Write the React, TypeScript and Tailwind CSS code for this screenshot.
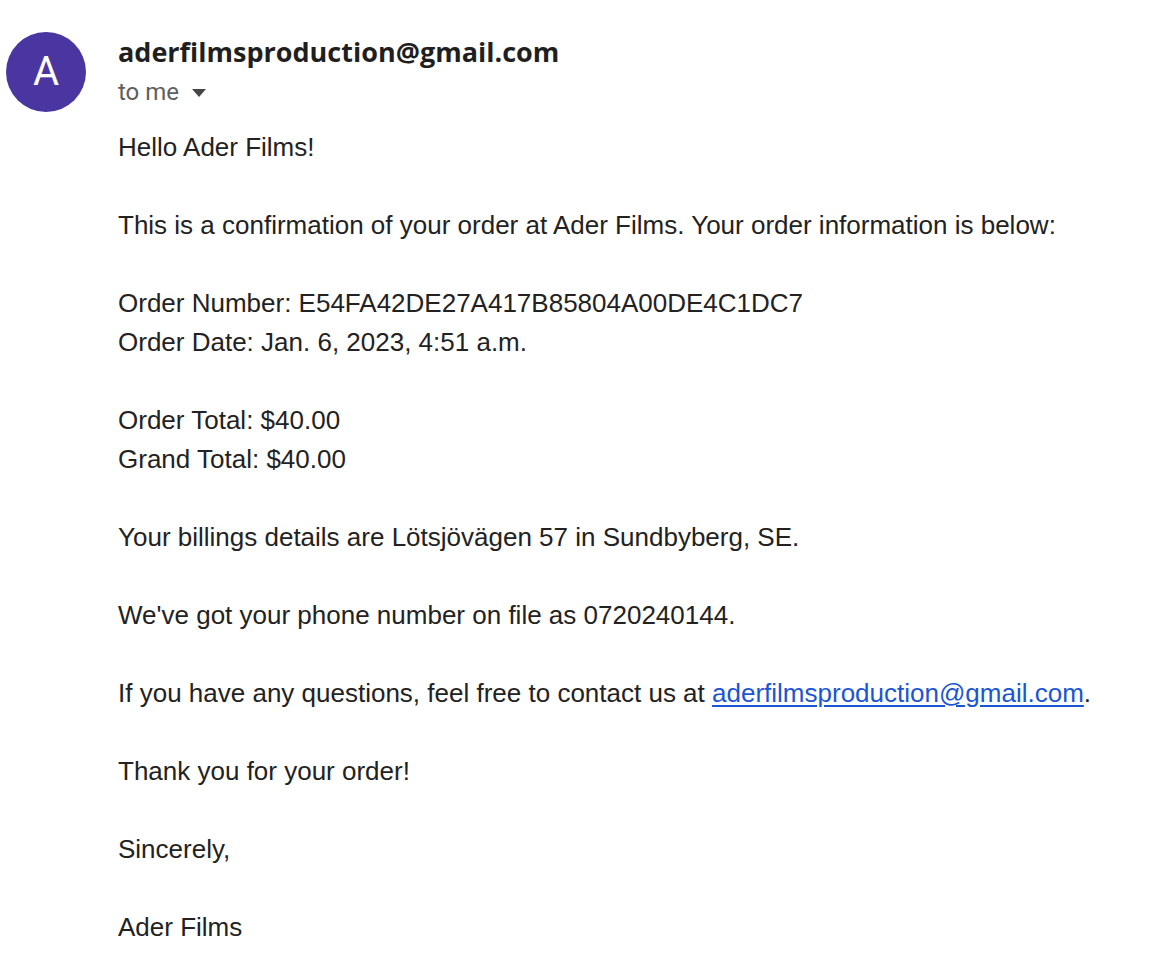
import React from "react";

export default function App() {
  const body = [
    "Hello Ader Films!",
    "",
    "This is a confirmation of your order at Ader Films. Your order information is below:",
    "",
    "Order Number: E54FA42DE27A417B85804A00DE4C1DC7",
    "Order Date: Jan. 6, 2023, 4:51 a.m.",
    "",
    "Order Total: $40.00",
    "Grand Total: $40.00",
    "",
    "Your billings details are Lötsjövägen 57 in Sundbyberg, SE.",
    "",
    "We've got your phone number on file as 0720240144.",
    "",
  ];
  const tail = [
    "",
    "Thank you for your order!",
    "",
    "Sincerely,",
    "",
    "Ader Films",
  ];
  return (
    <div className="w-[1150px] h-[976px] bg-white overflow-hidden flex pt-[32px] pl-[6px]">
      <div className="w-[80px] h-[80px] rounded-full bg-[#4a35a1] flex items-center justify-center shrink-0">
        <span
          className="text-white text-[40px] leading-none"
          style={{ fontFamily: "Roboto, 'Noto Sans', sans-serif" }}
        >
          A
        </span>
      </div>
      <div className="ml-[32px] flex flex-col">
        <div
          className="text-[27px] font-bold leading-[36px] text-[#1f1f1f] mt-[2px]"
          style={{ fontFamily: "'Open Sans', Roboto, sans-serif" }}
        >
          aderfilmsproduction@gmail.com
        </div>
        <div
          className="flex items-center gap-[12px] text-[24px] leading-[30px] text-[#5e5e5e] mt-[7px]"
          style={{ fontFamily: "Roboto, 'Noto Sans', sans-serif" }}
        >
          <span>to me</span>
          <svg width="16" height="10" viewBox="0 0 16 10" className="mt-[2px]">
            <path d="M1 1 L15 1 L8 9 Z" fill="#444746" />
          </svg>
        </div>
        <div
          className="mt-[21px] text-[26px] leading-[39px] text-[#222222]"
          style={{ fontFamily: "'Liberation Sans', Arial, sans-serif" }}
        >
          {body.map((l, i) => (
            <div key={i} className="h-[39px] whitespace-pre">
              {l}
            </div>
          ))}
          <div className="h-[39px] whitespace-pre">
            If you have any questions, feel free to contact us at{" "}
            <a href="#" className="text-[#1a55d6] underline underline-offset-[3px]">
              aderfilmsproduction@gmail.com
            </a>
            .
          </div>
          {tail.map((l, i) => (
            <div key={i} className="h-[39px] whitespace-pre">
              {l}
            </div>
          ))}
        </div>
      </div>
    </div>
  );
}
